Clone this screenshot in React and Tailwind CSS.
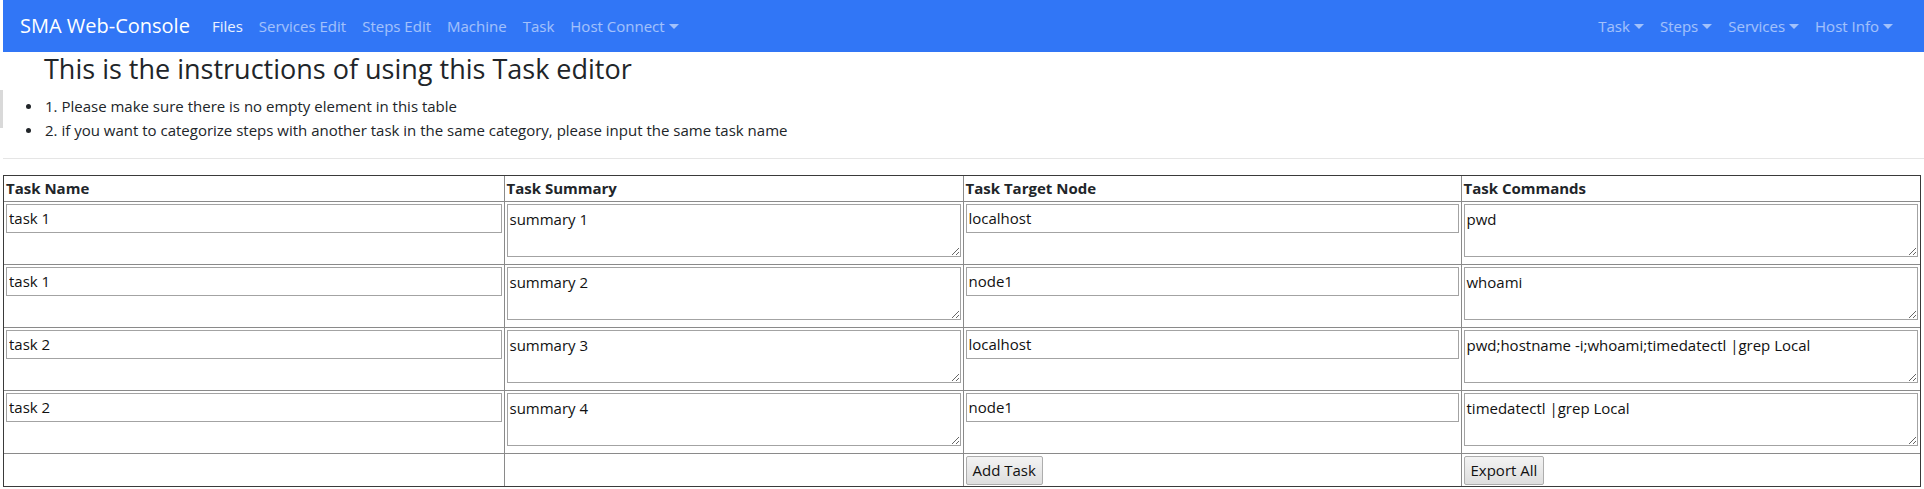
import React from 'react';

const leftLinks = [
  { label: 'Files', active: true },
  { label: 'Services Edit' },
  { label: 'Steps Edit' },
  { label: 'Machine' },
  { label: 'Task' },
  { label: 'Host Connect', caret: true },
];

const rightLinks = ['Task', 'Steps', 'Services', 'Host Info'];

const notes = [
  '1. Please make sure there is no empty element in this table',
  '2. if you want to categorize steps with another task in the same category, please input the same task name',
];

const tasks = [
  { name: 'task 1', summary: 'summary 1', node: 'localhost', cmd: 'pwd' },
  { name: 'task 1', summary: 'summary 2', node: 'node1', cmd: 'whoami' },
  { name: 'task 2', summary: 'summary 3', node: 'localhost', cmd: 'pwd;hostname -i;whoami;timedatectl |grep Local' },
  { name: 'task 2', summary: 'summary 4', node: 'node1', cmd: 'timedatectl |grep Local' },
];

function Caret() {
  return (
    <span className="ml-[4px] inline-block align-[3px] border-t-[5px] border-x-[5px] border-b-0 border-t-current border-x-transparent" />
  );
}

function NavLink({ children, active, caret }) {
  return (
    <a className={'px-2 text-[15px] leading-6 ' + (active ? 'text-white/90' : 'text-white/55')}>
      {children}
      {caret && <Caret />}
    </a>
  );
}

// 셀 테두리: 바깥쪽은 래퍼가 그리므로 안쪽만
function Cell({ children, first, last, head }) {
  const cls =
    'border-[#8a8a8a] align-top px-[2px] ' +
    (first ? 'border-l-0 ' : 'border-l ') +
    (last ? 'border-r-0 ' : 'border-r ') +
    (head ? 'border-b text-left font-bold py-[1px] h-[25px]' : 'border-b pt-[2px] h-[63px]');
  return head ? <th className={cls}>{children}</th> : <td className={cls}>{children}</td>;
}

function TextInput({ value }) {
  return (
    <input
      defaultValue={value}
      className="block w-full h-[29px] border border-[#a3a3a3] px-[2px] text-[15px] text-[#111] outline-none"
    />
  );
}

function TextArea({ value }) {
  return (
    <textarea
      defaultValue={value}
      className="block w-full h-[53px] border border-[#a3a3a3] px-[2px] py-[2px] text-[15px] leading-6 text-[#111] outline-none"
    />
  );
}

function Button({ children }) {
  return (
    <button className="h-[29px] px-[6px] mt-[2px] rounded-[2px] border border-[#adadad] bg-gradient-to-b from-[#f3f3f3] to-[#dedede] text-[15px] text-[#111]">
      {children}
    </button>
  );
}

export default function App() {
  return (
    <div className="flex min-h-[489px] bg-white text-[#212529] font-['Open_Sans',sans-serif]">
      <div className="w-[3px] shrink-0">
        <div className="mt-[90px] h-[38px] bg-[#d9d9d9]" />
      </div>

      <div className="flex-1 min-w-0">
        <nav className="h-[52px] bg-[#3176f6] flex items-center pl-[17px] pr-[23px]">
          <span className="text-[20px] text-white mr-[14px]">SMA Web-Console</span>
          <div className="flex items-center">
            {leftLinks.map((l) => (
              <NavLink key={l.label} active={l.active} caret={l.caret}>
                {l.label}
              </NavLink>
            ))}
          </div>
          <div className="ml-auto flex items-center">
            {rightLinks.map((l) => (
              <NavLink key={l} caret>
                {l}
              </NavLink>
            ))}
          </div>
        </nav>

        <h3 className="pl-[41px] text-[27px] font-medium leading-[34px] mb-2">
          This is the instructions of using this Task editor
        </h3>
        <ul className="text-[15px] leading-6 mb-4">
          {notes.map((n) => (
            <li key={n} className="flex items-center">
              <span className="ml-[23px] mr-[14px] w-[5px] h-[5px] rounded-full bg-[#212529]" />
              {n}
            </li>
          ))}
        </ul>
        <hr className="border-t border-[#e5e5e5] mb-4" />

        <div className="mr-[3px] border border-[#3a3a3a]">
          <table className="w-full table-fixed border-collapse text-[15px]">
            <colgroup>
              <col className="w-[500px]" />
              <col className="w-[459px]" />
              <col className="w-[498px]" />
              <col />
            </colgroup>
            <thead>
              <tr>
                <Cell head first>Task Name</Cell>
                <Cell head>Task Summary</Cell>
                <Cell head>Task Target Node</Cell>
                <Cell head last>Task Commands</Cell>
              </tr>
            </thead>
            <tbody>
              {tasks.map((t, i) => (
                <tr key={i}>
                  <Cell first><TextInput value={t.name} /></Cell>
                  <Cell><TextArea value={t.summary} /></Cell>
                  <Cell><TextInput value={t.node} /></Cell>
                  <Cell last><TextArea value={t.cmd} /></Cell>
                </tr>
              ))}
              <tr>
                <td className="border-r border-[#8a8a8a] h-[33px]" />
                <td className="border-r border-[#8a8a8a]" />
                <td className="border-r border-[#8a8a8a] px-[2px] align-top"><Button>Add Task</Button></td>
                <td className="px-[2px] align-top"><Button>Export All</Button></td>
              </tr>
            </tbody>
          </table>
        </div>
      </div>
    </div>
  );
}
